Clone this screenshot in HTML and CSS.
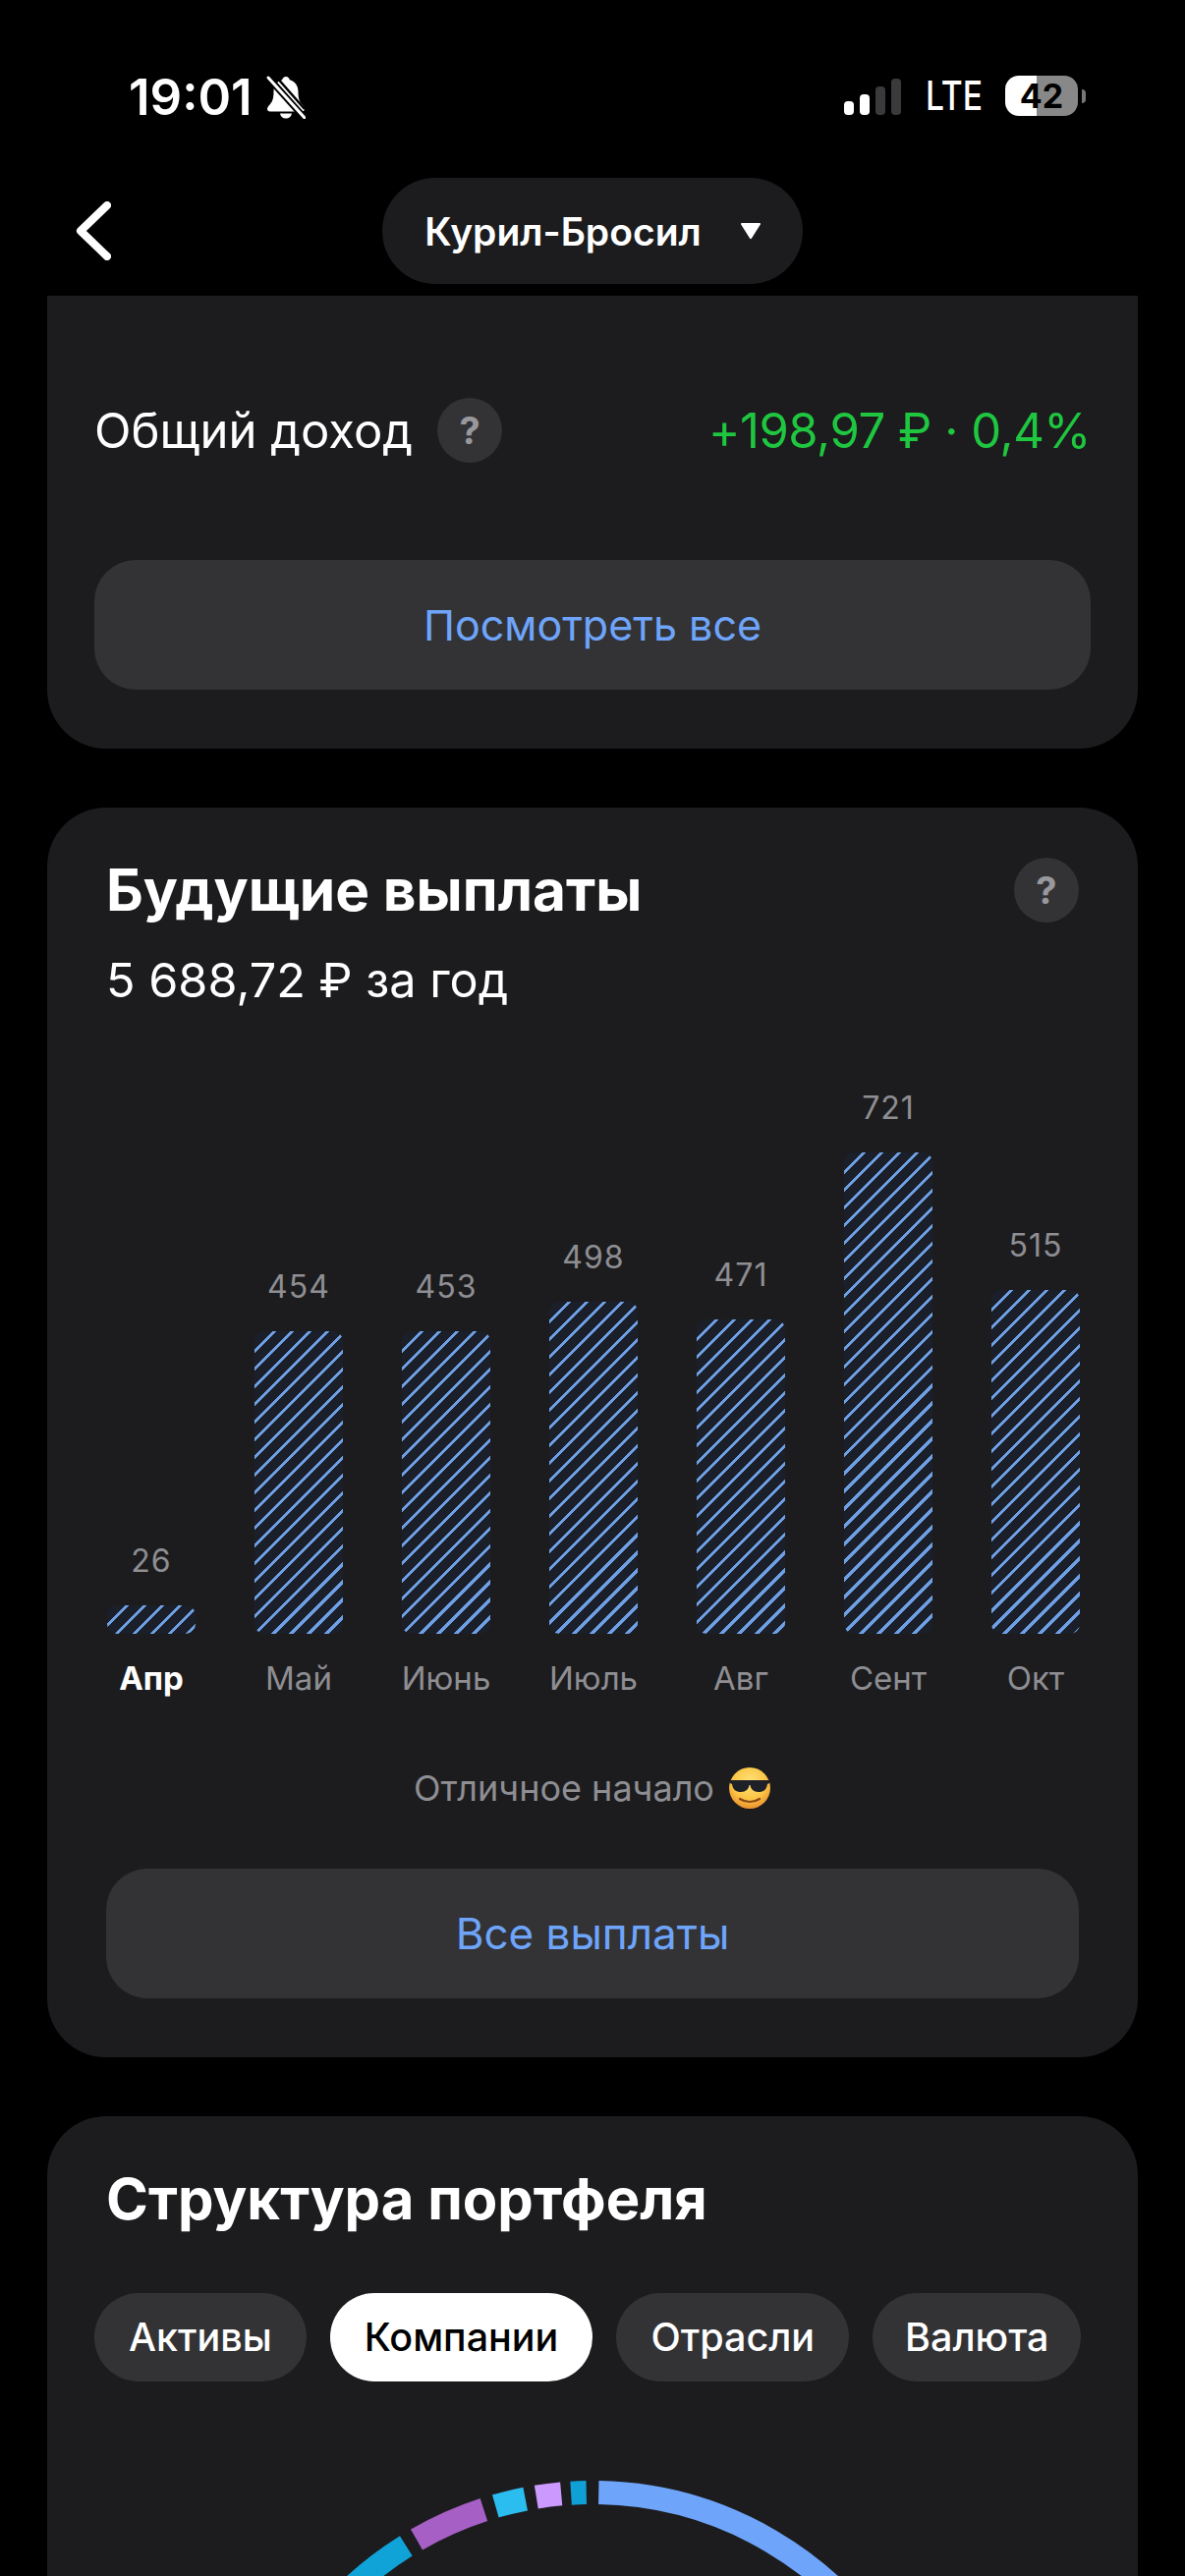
FILE: index.html
```html
<!DOCTYPE html>
<html lang="ru">
<head>
  <meta charset="UTF-8" />
  <meta name="viewport" content="width=device-width, initial-scale=1.0" />
  <title>Курил-Бросил</title>
  <link rel="stylesheet" href="styles.css">
</head>
<body>
  <div class="status">
    <div class="status-left">
      <span class="time">19:01</span>
      <svg class="bell" viewBox="0 0 40 44" width="40" height="44">
        <path fill="#fff" d="M20 1c-2 0-3.400 1.400-3.800 3.200C10.500 5.800 7.500 10.500 7.500 16.500c0 6-1 9.500-3.500 12.500-1.600 1.900-3 3.300-3 5 0 1.500 1.100 2.500 2.800 2.500h32.400c1.700 0 2.800-1 2.800-2.500 0-1.700-1.400-3.100-3-5-2.500-3-3.500-6.500-3.500-12.500 0-6-3-10.700-8.700-12.300C23.400 2.400 22 1 20 1zM14 38.500c.5 3 3 5 6 5s5.500-2 6-5z"/>
        <path stroke="#000" stroke-width="7" d="M3 3l34 38"/>
        <path stroke="#fff" stroke-width="3" stroke-linecap="round" d="M2 2l37 41"/>
        <path stroke="#000" stroke-width="2.500" d="M10 1l29 33"/>
      </svg>
    </div>
    <div class="status-right">
      <div class="signal">
        <span class="sig sig-1"></span>
        <span class="sig sig-2"></span>
        <span class="sig sig-3"></span>
        <span class="sig sig-4"></span>
      </div>
      <span class="lte-box"><span class="lte">LTE</span></span>
      <div class="battery"><span class="battery-num">42</span></div>
      <span class="battery-nub"></span>
    </div>
  </div>

  <div class="nav">
    <svg class="back" viewBox="0 0 36 60" width="36" height="60">
      <path d="M32 4L5 30l27 26" fill="none" stroke="#fff" stroke-width="8" stroke-linecap="round" stroke-linejoin="round"/>
    </svg>
    <div class="pill">
      <span>Курил-Бросил</span>
      <svg viewBox="0 0 20 18" width="20" height="18"><path d="M1 1h18a1 1 0 0 1 .8 1.500L11 16.500a1.200 1.200 0 0 1-2 0L.2 2.500A1 1 0 0 1 1 1z" fill="#fff"/></svg>
    </div>
  </div>

  <section class="card card-income">
    <div class="income-row">
      <span class="income-label">Общий доход</span>
      <span class="help">?</span>
      <span class="income-value">+198,97 ₽ · 0,4%</span>
    </div>
    <div class="btn income-btn">Посмотреть все</div>
  </section>

  <section class="card card-future">
    <div class="card-head">
      <h2>Будущие выплаты</h2>
      <span class="help">?</span>
    </div>
    <div class="subtitle">5 688,72 ₽ за год</div>

    <div class="chart">
      <div class="col"><span class="val">26</span><div class="bar" style="height:29px"></div><span class="month current">Апр</span></div>
      <div class="col"><span class="val">454</span><div class="bar" style="height:308px"></div><span class="month">Май</span></div>
      <div class="col"><span class="val">453</span><div class="bar" style="height:308px"></div><span class="month">Июнь</span></div>
      <div class="col"><span class="val">498</span><div class="bar" style="height:338px"></div><span class="month">Июль</span></div>
      <div class="col"><span class="val">471</span><div class="bar" style="height:320px"></div><span class="month">Авг</span></div>
      <div class="col"><span class="val">721</span><div class="bar" style="height:490px"></div><span class="month">Сент</span></div>
      <div class="col"><span class="val">515</span><div class="bar" style="height:350px"></div><span class="month">Окт</span></div>
    </div>

    <div class="hint">
      <span>Отличное начало</span>
      <svg viewBox="0 0 44 44" width="44" height="44">
        <defs>
          <radialGradient id="face" cx="50%" cy="35%" r="70%">
            <stop offset="0" stop-color="#ffe27a"/>
            <stop offset="0.6" stop-color="#fbc544"/>
            <stop offset="1" stop-color="#e8862a"/>
          </radialGradient>
        </defs>
        <circle cx="22" cy="22" r="21" fill="url(#face)"/>
        <path d="M2 14h40v3l-2 1c-1 6-4 8-9 8-5 0-8-3-8.500-7h-1c-.5 4-3.500 7-8.500 7-5 0-8-2-9-8l-2-1z" fill="#1f2128"/>
        <path d="M12 33c6 4 14 4 20 0" fill="none" stroke="#8a4a16" stroke-width="2.200" stroke-linecap="round"/>
      </svg>
    </div>

    <div class="btn">Все выплаты</div>
  </section>

  <section class="card card-structure">
    <h2>Структура портфеля</h2>
    <div class="tabs">
      <span class="tab">Активы</span>
      <span class="tab active">Компании</span>
      <span class="tab">Отрасли</span>
      <span class="tab">Валюта</span>
    </div>
    <svg class="donut" viewBox="0 0 800 200" width="800" height="200" fill="none" stroke-width="24">
      <path stroke="#6ea5fb" d="M406.250 22.050A358 358 0 0 1 710 201"/>
      <path stroke="#0fa0d6" d="M393.750 22.050A358 358 0 0 0 378.100 22.700"/>
      <path stroke="#cc99ff" d="M368.200 23.400A358 358 0 0 0 342.800 26.600"/>
      <path stroke="#2bbcf0" d="M331.700 28.600A358 358 0 0 0 301.300 35.900"/>
      <path stroke="#a55fc5" d="M289.400 39.500A358 358 0 0 0 221 70"/>
      <path stroke="#10a3d8" d="M210.300 76.400A358 358 0 0 0 90 201"/>
    </svg>
  </section>
</body>
</html>
```

FILE: styles.css
```css
* {
  box-sizing: border-box;
}
html, body {
  height: 2622px;
  overflow: hidden;
}
body {
  margin: 0;
  background: #000;
  color: #fff;
  font-family: 'Inter', 'Liberation Sans', sans-serif;
}
h2 {
  margin: 0;
  font-size: 58px;
  line-height: 64px;
  font-weight: 700;
}

/* status bar */
.status {
  height: 181px;
  padding: 77px 101px 0 131px;
  display: flex;
  justify-content: space-between;
  align-items: flex-start;
}
.status-left {
  height: 43px;
  display: flex;
  align-items: center;
  gap: 14px;
}
.time {
  font-size: 51px;
  line-height: 43px;
  font-weight: 600;
}
.bell {
  display: block;
}
.status-right {
  height: 41px;
  display: flex;
  align-items: center;
}
.signal {
  display: flex;
  align-items: flex-end;
  gap: 6px;
  height: 37px;
  margin-top: 2px;
}
.sig {
  width: 10px;
  border-radius: 4px;
  background: #fff;
}
.sig-1 { height: 14px; }
.sig-2 { height: 21px; }
.sig-3 { height: 29px; background: #3a3a3c; }
.sig-4 { height: 37px; background: #3a3a3c; }
.lte-box {
  margin-left: 25px;
  width: 57px;
  height: 41px;
}
.lte {
  display: inline-block;
  font-size: 41px;
  line-height: 41px;
  font-weight: 500;
  transform: scaleX(0.82);
  transform-origin: left center;
}
.battery {
  margin-left: 24px;
  width: 74px;
  height: 41px;
  border-radius: 14px;
  background: linear-gradient(90deg, #fff 0 32px, #888 32px);
  color: #000;
  display: flex;
  align-items: center;
  justify-content: center;
}
.battery-num {
  font-size: 34px;
  font-weight: 700;
  line-height: 41px;
}
.battery-nub {
  margin-left: 4px;
  width: 4px;
  height: 14px;
  border-radius: 0 4px 4px 0;
  background: #777;
}

/* nav */
.nav {
  display: grid;
  grid-template-columns: 1fr auto 1fr;
  align-items: center;
  height: 108px;
  margin-bottom: 12px;
}
.back {
  margin-left: 77px;
}
.pill {
  height: 108px;
  padding: 0 43px;
  border-radius: 54px;
  background: #1c1c1e;
  display: flex;
  align-items: center;
  gap: 40px;
  font-size: 39px;
  font-weight: 600;
}

/* cards */
.card {
  width: 1110px;
  margin: 0 auto 60px;
  background: #1c1c1e;
  border-radius: 60px;
}
.card-income {
  padding: 104px 48px 60px;
  border-radius: 0 0 60px 60px;
}
.income-row {
  display: flex;
  align-items: center;
  height: 66px;
  font-size: 49px;
}
.income-label {
  margin-right: 25px;
}
.income-value {
  margin-left: auto;
  color: #1fc63f;
  letter-spacing: -0.450px;
}
.help {
  flex: none;
  width: 66px;
  height: 66px;
  border-radius: 50%;
  background: #333336;
  color: #98989d;
  font-size: 38px;
  font-weight: 700;
  display: flex;
  align-items: center;
  justify-content: center;
}
.btn {
  height: 132px;
  border-radius: 42px;
  background: #333336;
  color: #6ea5fb;
  font-size: 44px;
  display: flex;
  align-items: center;
  justify-content: center;
}
.income-btn {
  margin-top: 99px;
  font-size: 43px;
}
.card-future {
  padding: 51px 60px 60px;
}
.card-future h2 {
  font-size: 58.500px;
}
.card-head {
  display: flex;
  align-items: center;
  justify-content: space-between;
}
.subtitle {
  margin-top: 29px;
  font-size: 48.600px;
  line-height: 60px;
}

/* bar chart */
.chart {
  margin: 80px -1px 0 1px;
  display: flex;
  justify-content: space-between;
  align-items: flex-end;
}
.col {
  width: 90px;
  display: flex;
  flex-direction: column;
  align-items: center;
}
.val {
  font-size: 32px;
  line-height: 40px;
  letter-spacing: 1px;
  color: #8e8e93;
  margin-bottom: 25px;
}
.bar {
  width: 90px;
  border-radius: 10px;
  background: repeating-linear-gradient(135deg, #6f9fe3 0 3.500px, #1a1f29 3.500px 12.730px);
}
.month {
  margin-top: 23px;
  font-size: 33px;
  line-height: 44px;
  color: #8e8e93;
  white-space: nowrap;
}
.month.current {
  color: #fff;
  font-weight: 700;
}
.hint {
  margin-top: 68px;
  height: 44px;
  display: flex;
  align-items: center;
  justify-content: center;
  gap: 14px;
  font-size: 36px;
  color: #8e8e93;
}
.hint + .btn {
  margin-top: 60px;
}

/* structure */
.card-structure {
  padding: 52px 48px 0;
  height: 500px;
  margin-bottom: 0;
  border-radius: 60px 60px 0 0;
  overflow: hidden;
}
.card-structure h2 {
  margin-left: 12px;
}
.tabs {
  margin-top: 64px;
  display: flex;
  gap: 24px;
}
.tab {
  height: 90px;
  padding: 0 35px;
  border-radius: 45px;
  background: #333336;
  font-size: 39.500px;
  font-weight: 500;
  display: flex;
  align-items: center;
}
.tab:last-child {
  padding: 0 33px;
}
.tab.active {
  background: #fff;
  color: #000;
}
.donut {
  display: block;
  margin: 91px 0 0 107px;
}
```
